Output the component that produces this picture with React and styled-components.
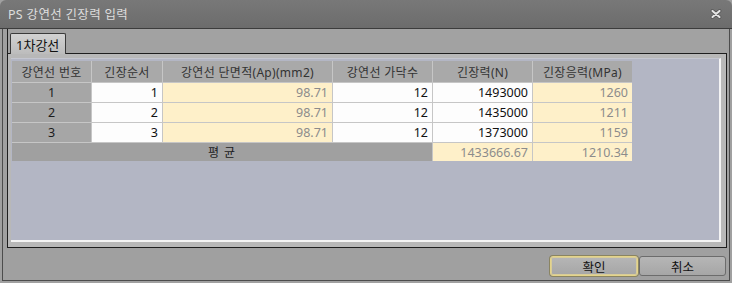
import React from 'react';
import styled, { createGlobalStyle } from 'styled-components';

const GlobalStyle = createGlobalStyle`
  html, body {
    margin: 0;
    padding: 0;
    background: #a0a0a0;
    overflow: hidden;
  }
  * { box-sizing: border-box; }
`;

const FONT = `"Noto Sans", "Noto Sans CJK KR", sans-serif`;

const columns = [
    { key: 'no', title: '강연선 번호', width: 79, kind: 'head' },
    { key: 'order', title: '긴장순서', width: 70, kind: 'edit' },
    { key: 'area', title: '강연선 단면적(Ap)(mm2)', width: 169, kind: 'calc' },
    { key: 'count', title: '강연선 가닥수', width: 99, kind: 'edit' },
    { key: 'force', title: '긴장력(N)', width: 99, kind: 'edit' },
    { key: 'stress', title: '긴장응력(MPa)', width: 99, kind: 'calc' },
];

const rows = [
    { no: 1, order: 1, area: '98.71', count: 12, force: 1493000, stress: 1260 },
    { no: 2, order: 2, area: '98.71', count: 12, force: 1435000, stress: 1211 },
    { no: 3, order: 3, area: '98.71', count: 12, force: 1373000, stress: 1159 },
];

const App = () => {
    return (
        <>
            <GlobalStyle />
            <Window>
                <TitleBar>
                    <Title>PS 강연선 긴장력 입력</Title>
                    <CloseButton aria-label="close">
                        <svg width="12" height="10" viewBox="0 0 12 10">
                            <path d="M2.5 2 L9.5 8 M9.5 2 L2.5 8" stroke="#505050" strokeWidth="3.6" strokeLinecap="round" />
                            <path d="M2.5 2 L9.5 8 M9.5 2 L2.5 8" stroke="#e4e4e4" strokeWidth="2.2" strokeLinecap="round" />
                        </svg>
                    </CloseButton>
                </TitleBar>
                <Body>
                    <TabControl>
                        <TabStrip>
                            <Tab>1차강선</Tab>
                        </TabStrip>
                        <TabPage>
                            <GridArea>
                                <Grid>
                                    {columns.map(c => (
                                        <HeaderCell key={c.key}>{c.title}</HeaderCell>
                                    ))}
                                    {rows.map(r => columns.map(c => (
                                        <Cell key={r.no + c.key} $kind={c.kind}>{r[c.key]}</Cell>
                                    )))}
                                    <AverageLabel>평 균</AverageLabel>
                                    <Cell $kind="calc">1433666.67</Cell>
                                    <Cell $kind="calc">1210.34</Cell>
                                </Grid>
                            </GridArea>
                        </TabPage>
                    </TabControl>
                    <ButtonBar>
                        <Button $focused>확인</Button>
                        <Button>취소</Button>
                    </ButtonBar>
                </Body>
            </Window>
        </>
    );
};

export default App;

const Window = styled.div`
  width: 732px;
  height: 283px;
  display: flex;
  flex-direction: column;
  background: #a0a0a0;
  font-family: ${FONT};
  font-size: 12px;
  border-radius: 6px 6px 0 0;
  overflow: hidden;
`

const TitleBar = styled.div`
  height: 29px;
  flex: none;
  display: flex;
  align-items: center;
  justify-content: space-between;
  padding: 0 10px 1px 8px;
  background: linear-gradient(#787878, #6c6c6c);
  border-bottom: 1px solid #3c3c3c;
`

const Title = styled.div`
  color: #dedede;
  font-size: 12.5px;
  letter-spacing: 0.3px;
`

const CloseButton = styled.div`
  display: flex;
  align-items: center;
  margin-top: 1px;
`

const Body = styled.div`
  flex: 1;
  display: flex;
  flex-direction: column;
  margin: 0 2px 2px;
  border: 1px solid #4c4c4c;
  border-top: none;
`

const TabControl = styled.div`
  margin: 0 2px 0 4px;
  height: 219px;
  display: flex;
  flex-direction: column;
  border-left: 1px solid #1e1e1e;
`

const TabStrip = styled.div`
  height: 24px;
  flex: none;
  display: flex;
  align-items: flex-end;
  padding-left: 2px;
  background: #a2a2a2;
`

const Tab = styled.div`
  height: 21px;
  width: 56px;
  padding: 1px 0 0 5px;
  margin-bottom: -1px;
  position: relative;
  z-index: 1;
  color: #111;
  font-size: 13px;
  background: linear-gradient(#d2d2d2, #bcbcbc);
  border: 1px solid #3a3a3a;
  border-bottom: none;
  border-radius: 2px 2px 0 0;
`

const TabPage = styled.div`
  flex: 1;
  display: flex;
  padding: 4px 5px 5px 3px;
  background: #b8b8b8;
  border: 1px solid #1e1e1e;
  border-left: none;
`

const GridArea = styled.div`
  flex: 1;
  padding: 2px 1px;
  background: #b3b6c4;
  border-top: 1px solid #c4c6d0;
  border-right: 2px solid #f4f4f4;
  border-bottom: 2px solid #f4f4f4;
`

const Grid = styled.div`
  display: grid;
  grid-template-columns: ${columns.map(c => c.width + 'px').join(' ')};
  grid-template-rows: 21px 19px 19px 19px 18px;
  gap: 1px;
  width: max-content;
  background: #c6c6c6;
`

const HeaderCell = styled.div`
  display: flex;
  align-items: center;
  justify-content: center;
  background: #a9a9a9;
  color: #333;
  font-size: 12px;
  letter-spacing: 0.3px;
`

const cellColors = {
    head: { bg: '#a6a6a6', fg: '#1c1c1c', align: 'center' },
    edit: { bg: '#fdfdfd', fg: '#111111', align: 'flex-end' },
    calc: { bg: '#fef0c9', fg: '#8c8c8c', align: 'flex-end' },
};

const Cell = styled.div`
  display: flex;
  align-items: center;
  justify-content: ${p => cellColors[p.$kind].align};
  padding: 0 4px;
  background: ${p => cellColors[p.$kind].bg};
  color: ${p => cellColors[p.$kind].fg};
  font-size: 12.5px;
`

const AverageLabel = styled.div`
  grid-column: span 4;
  display: flex;
  align-items: center;
  justify-content: center;
  background: #a0a0a0;
  color: #1c1c1c;
  font-size: 12px;
  letter-spacing: 1px;
`

const ButtonBar = styled.div`
  flex: 1;
  display: flex;
  justify-content: flex-end;
  align-items: flex-start;
  gap: 1px;
  padding: 8px 3px 0 0;
`

const Button = styled.div`
  width: ${p => (p.$focused ? 88 : 87)}px;
  height: 20px;
  display: flex;
  align-items: center;
  justify-content: center;
  color: #111;
  font-size: 12.5px;
  background: linear-gradient(#b6b6b6, #a6a6a6);
  border: 1px solid ${p => (p.$focused ? '#e4d48a' : '#6c6c6c')};
  box-shadow: ${p => (p.$focused ? '0 0 0 1px #8a8462, inset 0 0 0 1px #d8cc98' : 'none')};
  border-radius: 3px;
`
